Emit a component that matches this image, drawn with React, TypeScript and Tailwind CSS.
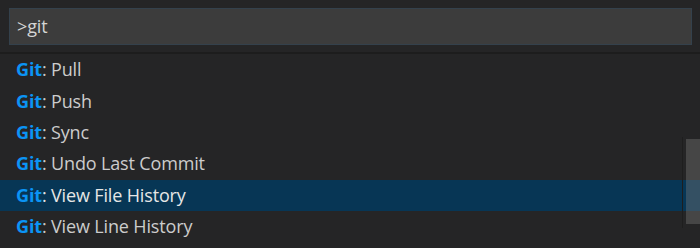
const items = [
  'Pull',
  'Push',
  'Sync',
  'Undo Last Commit',
  'View File History',
  'View Line History',
]

export default function App() {
  const selected = 4

  return (
    <div
      className="relative w-[700px] h-[248px] overflow-hidden bg-[#252526] text-[#cccccc]"
      style={{ fontFamily: '"Open Sans", "Noto Sans", sans-serif' }}
    >
      {/* Input */}
      <div className="h-[52px] pt-[8px] pl-[9px] pr-[8px] bg-[#252526]">
        <div className="h-[37px] flex items-center pl-[7px] bg-[#3c3c3c] border border-[#34414c] text-[18px] tracking-[-0.15px] text-[#d4d4d4]">
          &gt;git
        </div>
      </div>
      <div className="h-[2px] bg-[#1d1d1d]" />

      {/* Results */}
      <div className="flex flex-col">
        {items.map((label, i) => (
          <div
            key={label}
            className={`h-[31.4px] flex items-center pl-[16px] text-[18px] tracking-[-0.15px] ${
              i === selected ? 'bg-[#073655] text-[#e6e6e6]' : ''
            }`}
          >
            <span className="font-bold text-[#0b94f5]">Git</span>
            <span>: {label}</span>
          </div>
        ))}
      </div>

      {/* Scrollbar */}
      <div className="absolute left-[682px] top-[137px] w-px h-[91px] bg-[#1e1e1e]" />
      <div className="absolute left-[686px] top-[139px] w-[14px] h-[85px] bg-[rgba(121,121,121,0.4)]" />
    </div>
  )
}
